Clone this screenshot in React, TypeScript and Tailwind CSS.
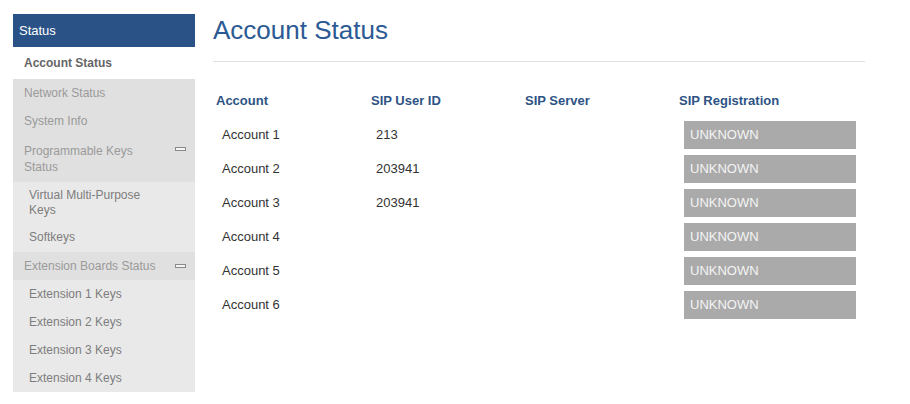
import React from "react";

type NavItem = {
  label: string;
  kind: "active" | "top" | "sub";
  h: string;
  toggle?: boolean;
  wrap?: boolean;
};

const nav: NavItem[] = [
  { label: "Account Status", kind: "active", h: "h-[32px]" },
  { label: "Network Status", kind: "top", h: "h-[28px]" },
  { label: "System Info", kind: "top", h: "h-[28px]" },
  { label: "Programmable Keys Status", kind: "top", h: "h-[47px]", toggle: true, wrap: true },
  { label: "Virtual Multi-Purpose Keys", kind: "sub", h: "h-[41px]" },
  { label: "Softkeys", kind: "sub", h: "h-[29px]" },
  { label: "Extension Boards Status", kind: "top", h: "h-[28px]", toggle: true },
  { label: "Extension 1 Keys", kind: "sub", h: "h-[28px]" },
  { label: "Extension 2 Keys", kind: "sub", h: "h-[28px]" },
  { label: "Extension 3 Keys", kind: "sub", h: "h-[28px]" },
  { label: "Extension 4 Keys", kind: "sub", h: "h-[28px]" },
];

const accounts = [
  { name: "Account 1", userId: "213", server: "", reg: "UNKNOWN" },
  { name: "Account 2", userId: "203941", server: "", reg: "UNKNOWN" },
  { name: "Account 3", userId: "203941", server: "", reg: "UNKNOWN" },
  { name: "Account 4", userId: "", server: "", reg: "UNKNOWN" },
  { name: "Account 5", userId: "", server: "", reg: "UNKNOWN" },
  { name: "Account 6", userId: "", server: "", reg: "UNKNOWN" },
];

const Minus = () => (
  <span className="block w-[11px] h-[4px] border border-[#8a8a8a] bg-[#f4f4f4] shrink-0" />
);

const Sidebar = () => (
  <div className="w-[182px] shrink-0">
    <div className="h-[33px] bg-[#2a5286] text-white text-[13px] pl-[6px] flex items-center">
      Status
    </div>
    {nav.map((item) => {
      if (item.kind === "active") {
        return (
          <div
            key={item.label}
            className={`${item.h} bg-white pl-[11px] flex items-center text-[12px] font-bold text-[#666666]`}
          >
            {item.label}
          </div>
        );
      }
      if (item.kind === "sub") {
        return (
          <div
            key={item.label}
            className={`${item.h} bg-[#e9e9e9] pl-[16px] pr-[30px] flex items-center text-[12px] leading-[15px] text-[#7d7d7d]`}
          >
            {item.label}
          </div>
        );
      }
      return (
        <div
          key={item.label}
          className={`${item.h} bg-[#e0e0e0] pl-[11px] pr-[9px] flex items-center justify-between text-[12px] leading-[16px] text-[#9a9a9a]`}
        >
          <span className={item.wrap ? "w-[125px]" : ""}>{item.label}</span>
          {item.toggle && (
            <span className={item.wrap ? "self-start mt-[12px]" : ""}>
              <Minus />
            </span>
          )}
        </div>
      );
    })}
  </div>
);

export default function App() {
  return (
    <div
      className="flex pt-[14px] pl-[13px] bg-white min-h-[404px]"
      style={{ fontFamily: '"Liberation Sans", Arial, sans-serif' }}
    >
      <Sidebar />
      <div className="ml-[18px] w-[652px]">
        <h1 className="text-[26px] leading-[32px] text-[#2c5a94]">Account Status</h1>
        <div className="mt-[15px] h-px bg-[#e0e0e0]" />
        <div className="mt-[22px] grid grid-cols-[155px_154px_154px_1fr] text-[13px]">
          <div className="h-[34px] flex items-center pl-[3px] font-bold text-[#2e5385]">Account</div>
          <div className="h-[34px] flex items-center pl-[3px] font-bold text-[#2e5385]">SIP User ID</div>
          <div className="h-[34px] flex items-center pl-[3px] font-bold text-[#2e5385]">SIP Server</div>
          <div className="h-[34px] flex items-center pl-[3px] font-bold text-[#2e5385]">SIP Registration</div>
          {accounts.map((a) => (
            <React.Fragment key={a.name}>
              <div className="h-[34px] flex items-center pl-[9px] text-[#333333]">{a.name}</div>
              <div className="h-[34px] flex items-center pl-[8px] text-[#333333]">{a.userId}</div>
              <div className="h-[34px] flex items-center pl-[8px] text-[#333333]">{a.server}</div>
              <div className="h-[34px] flex items-center pl-[8px]">
                <div className="w-[172px] h-[28px] bg-[#aaaaaa] text-[#f4f4f4] pl-[6px] flex items-center">
                  {a.reg}
                </div>
              </div>
            </React.Fragment>
          ))}
        </div>
      </div>
    </div>
  );
}
